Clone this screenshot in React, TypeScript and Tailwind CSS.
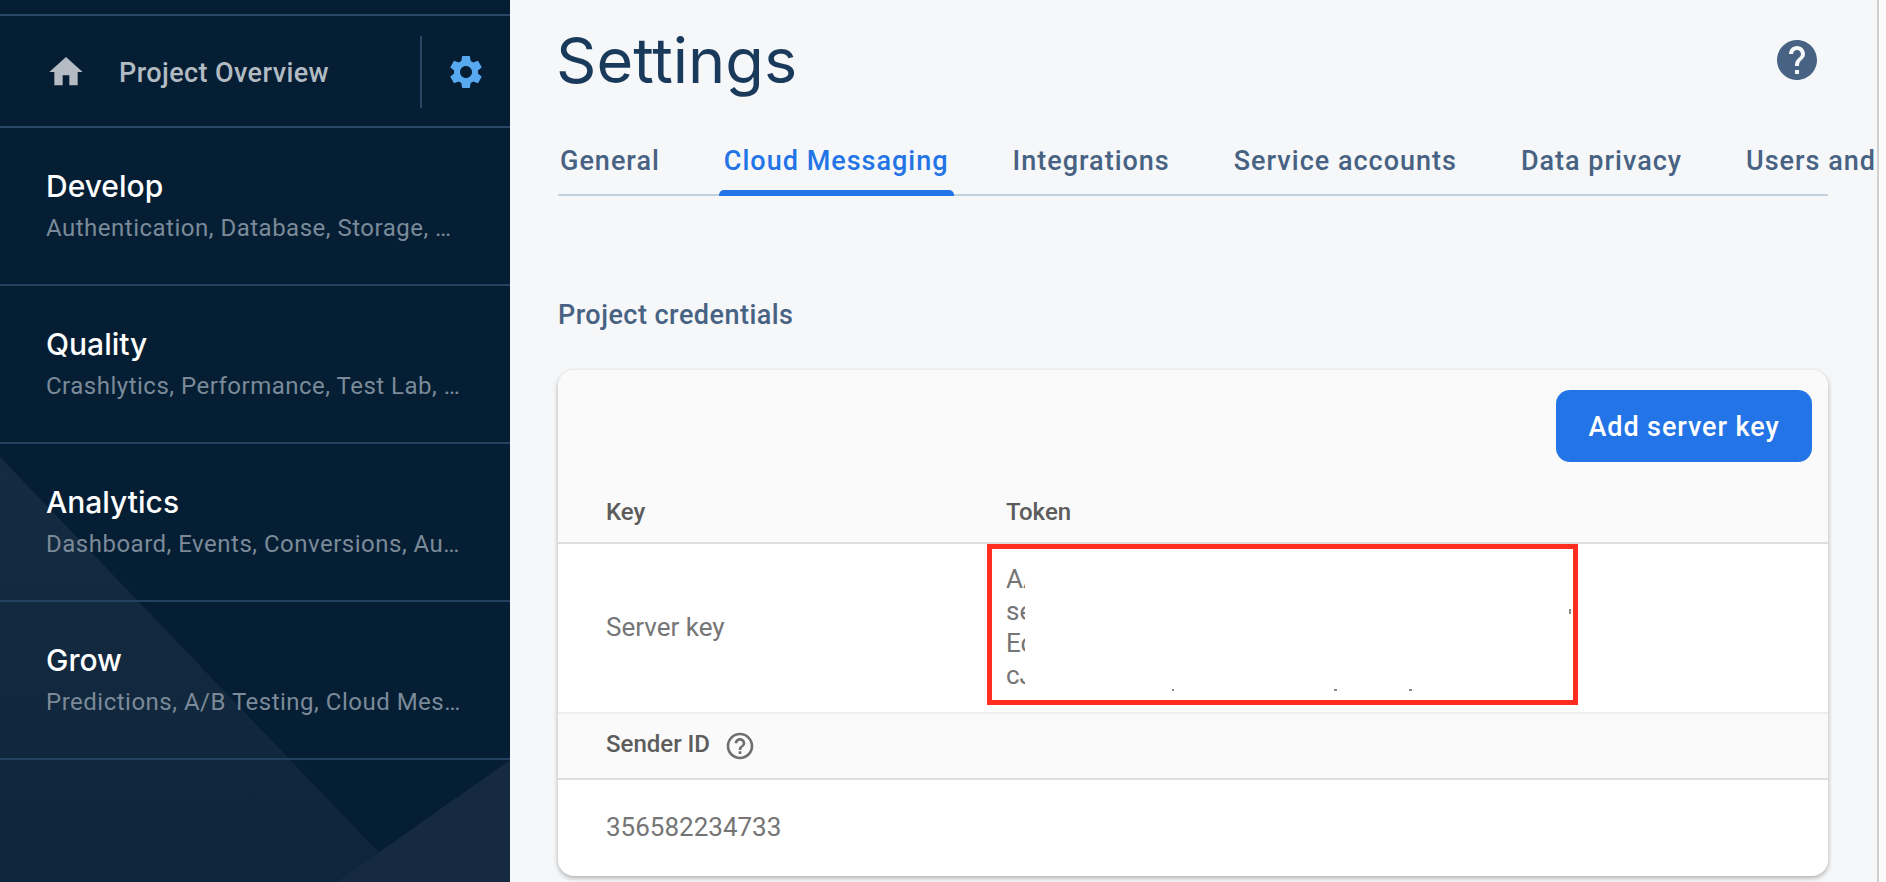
const roboto = "font-['Roboto',sans-serif]"

const navGroups = [
  { title: "Develop", items: "Authentication, Database, Storage, …" },
  { title: "Quality", items: "Crashlytics, Performance, Test Lab, …" },
  { title: "Analytics", items: "Dashboard, Events, Conversions, Au…" },
  { title: "Grow", items: "Predictions, A/B Testing, Cloud Mes…" },
]

const tabs = ["General", "Cloud Messaging", "Integrations", "Service accounts", "Data privacy", "Users and"]

function Sidebar() {
  return (
    <aside className={`relative w-[510px] shrink-0 overflow-hidden bg-[#051e34] pt-[14px] ${roboto}`}>
      {/* Background shapes */}
      <svg className="absolute inset-0 h-full w-full" viewBox="0 0 510 882" preserveAspectRatio="none">
        <defs>
          <linearGradient id="fade" x1="0" y1="0" x2="0" y2="1">
            <stop offset="0" stopColor="#152b41" />
            <stop offset="1" stopColor="#0e253b" />
          </linearGradient>
        </defs>
        <polygon points="0,457 407,882 0,882" fill="url(#fade)" />
        <polygon points="510,760 337,882 510,882" fill="#152a40" />
      </svg>

      <div className="relative">
        {/* Project overview */}
        <div className="flex h-[114px] items-center border-y-2 border-[#2a4866]">
          <svg className="ml-[46px] mt-[2px] h-10 w-10 fill-[#b4bbc2]" viewBox="0 0 24 24">
            <path d="M10 20v-6h4v6h5v-8h3L12 3 2 12h3v8z" />
          </svg>
          <span className="ml-[33px] pt-[4px] text-[27px] font-medium tracking-[0.4px] text-[#b2bac2]">Project Overview</span>
          <div className="ml-auto mt-[2px] flex h-[72px] w-[90px] items-center justify-center border-l-2 border-[#2a4866]">
            <svg className="h-10 w-10 fill-[#58aaf0]" viewBox="0 0 24 24">
              <path d="M19.14 12.94c.04-.3.06-.61.06-.94 0-.32-.02-.64-.07-.94l2.03-1.58a.49.49 0 0 0 .12-.61l-1.92-3.32a.488.488 0 0 0-.59-.22l-2.39.96c-.5-.38-1.03-.7-1.62-.94l-.36-2.54a.484.484 0 0 0-.48-.41h-3.84c-.24 0-.43.17-.47.41l-.36 2.54c-.59.24-1.13.57-1.62.94l-2.39-.96c-.22-.08-.47 0-.59.22L2.74 8.87c-.12.21-.08.47.12.61l2.03 1.58c-.05.3-.09.63-.09.94s.02.64.07.94l-2.03 1.58a.49.49 0 0 0-.12.61l1.92 3.32c.12.22.37.29.59.22l2.39-.96c.5.38 1.03.7 1.62.94l.36 2.54c.05.24.24.41.48.41h3.84c.24 0 .44-.17.47-.41l.36-2.54c.59-.24 1.13-.56 1.62-.94l2.39.96c.22.08.47 0 .59-.22l1.92-3.32c.12-.22.07-.47-.12-.61l-2.01-1.58zM12 15.6c-1.98 0-3.6-1.62-3.6-3.6s1.62-3.6 3.6-3.6 3.6 1.62 3.6 3.6-1.62 3.6-3.6 3.6z" />
            </svg>
          </div>
        </div>

        {/* Nav groups */}
        {navGroups.map((group) => (
          <div key={group.title} className="h-[158px] border-b-2 border-[#24425f] pl-[46px] pt-[39px]">
            <div className="font-['Inter',sans-serif] text-[30px] font-medium leading-[38px] text-white">{group.title}</div>
            <div className="mt-[7px] whitespace-nowrap text-[24px] leading-[32px] tracking-[0.5px] text-[#7b8a98]">
              {group.items}
            </div>
          </div>
        ))}
      </div>
    </aside>
  )
}

function TokenCell() {
  const lines = ["AAAA", "sebb", "Edcc", "cJJJ"]
  return (
    <div className="relative h-[161px] w-[591px] border-[5px] border-[#ff2d20] bg-white pl-[14px] pt-[14px]">
      {lines.map((line) => (
        <div key={line} className="h-8 w-[19px] overflow-hidden whitespace-nowrap text-[26px] leading-8 text-[#757575]">
          {line}
        </div>
      ))}
      {/* leftovers of the blanked-out token */}
      <div className="absolute left-[577px] top-[60px] h-[5px] w-[2px] bg-[#8a8a8a]" />
      <div className="absolute left-[180px] top-[140px] h-[2px] w-[2px] bg-[#8a8a8a]" />
      <div className="absolute left-[342px] top-[140px] h-[2px] w-[3px] bg-[#8a8a8a]" />
      <div className="absolute left-[417px] top-[140px] h-[2px] w-[3px] bg-[#8a8a8a]" />
    </div>
  )
}

function CredentialsCard() {
  return (
    <div className={`flex h-[506px] w-[1270px] flex-col overflow-hidden rounded-2xl bg-white shadow-[0_2px_5px_rgba(0,0,0,0.3)] ${roboto}`}>
      <div className="h-[174px] border-b-2 border-[#dedede] bg-[#fafafa]">
        <div className="flex justify-end pr-4 pt-5">
          <button className="h-[72px] w-[256px] rounded-[14px] bg-[#2374e6] pt-[2px] text-[27px] font-medium tracking-[0.9px] text-white">
            Add server key
          </button>
        </div>
        <div className="mt-[34px] flex items-center pl-[48px] text-[24px] font-medium leading-8 text-[#5c5c5c]">
          <span className="w-[400px]">Key</span>
          <span>Token</span>
        </div>
      </div>
      <div className="flex h-[170px] border-b-2 border-[#eeeeee]">
        <div className="flex h-[168px] w-[429px] items-center pb-[2px] pl-[48px] text-[26px] text-[#757575]">Server key</div>
        <TokenCell />
      </div>
      <div className="flex h-[66px] items-center gap-[14px] border-b-2 border-[#dedede] bg-[#fafafa] pl-[48px]">
        <span className="pb-[4px] text-[24px] font-medium text-[#5c5c5c]">Sender ID</span>
        <svg className="h-8 w-8 fill-[#6f6f6f]" viewBox="0 0 24 24">
          <path d="M11 18h2v-2h-2v2zm1-16C6.48 2 2 6.48 2 12s4.48 10 10 10 10-4.48 10-10S17.52 2 12 2zm0 18c-4.41 0-8-3.59-8-8s3.59-8 8-8 8 3.59 8 8-3.59 8-8 8zm0-14c-2.21 0-4 1.79-4 4h2c0-1.1.9-2 2-2s2 .9 2 2c0 2-3 1.75-3 5h2c0-2.25 3-2.5 3-5 0-2.21-1.79-4-4-4z" />
        </svg>
      </div>
      <div className="flex flex-1 items-center pb-[2px] pl-[48px] text-[26px] text-[#757575]">356582234733</div>
    </div>
  )
}

export default function App() {
  return (
    <div className="flex h-[882px] w-[1886px] overflow-hidden bg-[#f6f7f9]">
      <Sidebar />

      <main className="min-w-0 flex-1 overflow-hidden pl-[48px]">
        {/* Title */}
        <div className="flex h-[120px] items-center justify-between pr-[56px]">
          <h1 className="-ml-[2px] font-['Inter',sans-serif] text-[63px] text-[#1a3a5c]">Settings</h1>
          <svg className="h-12 w-12 fill-[#476282]" viewBox="0 0 24 24">
            <path d="M12 2C6.48 2 2 6.48 2 12s4.48 10 10 10 10-4.48 10-10S17.52 2 12 2zm1 17h-2v-2h2v2zm2.07-7.75l-.9.92C13.45 12.9 13 13.5 13 15h-2v-.5c0-1.1.45-2.1 1.17-2.83l1.24-1.26c.37-.36.59-.86.59-1.41 0-1.1-.9-2-2-2s-2 .9-2 2H8c0-2.21 1.79-4 4-4s4 1.79 4 4c0 .88-.36 1.68-.93 2.25z" />
          </svg>
        </div>

        {/* Tabs */}
        <div className={`h-[76px] w-[1270px] border-b-2 border-[#c3d0de] pt-[25px] ${roboto}`}>
          <div className="-ml-[3px] flex gap-[54px] whitespace-nowrap">
            {tabs.map((tab) => (
              <div
                key={tab}
                className={
                  tab === "Cloud Messaging"
                    ? "relative h-[51px] px-[5px] text-[27px] font-medium leading-8 tracking-[1px] text-[#2374e6]"
                    : "h-[51px] px-[5px] text-[27px] font-medium leading-8 tracking-[1px] text-[#476282]"
                }
              >
                {tab}
                {tab === "Cloud Messaging" && (
                  <div className="absolute inset-x-0 bottom-0 h-[6px] rounded-t-[5px] bg-[#2374e6]" />
                )}
              </div>
            ))}
          </div>
        </div>

        <h2 className={`mt-[103px] h-[71px] text-[27px] font-medium leading-8 tracking-[0.47px] text-[#476282] ${roboto}`}>
          Project credentials
        </h2>

        <CredentialsCard />
      </main>

      {/* Scrollbar gutter */}
      <div className="w-[9px] shrink-0 border-l-2 border-[#d0d0d0] bg-[#fafafa]" />
    </div>
  )
}
